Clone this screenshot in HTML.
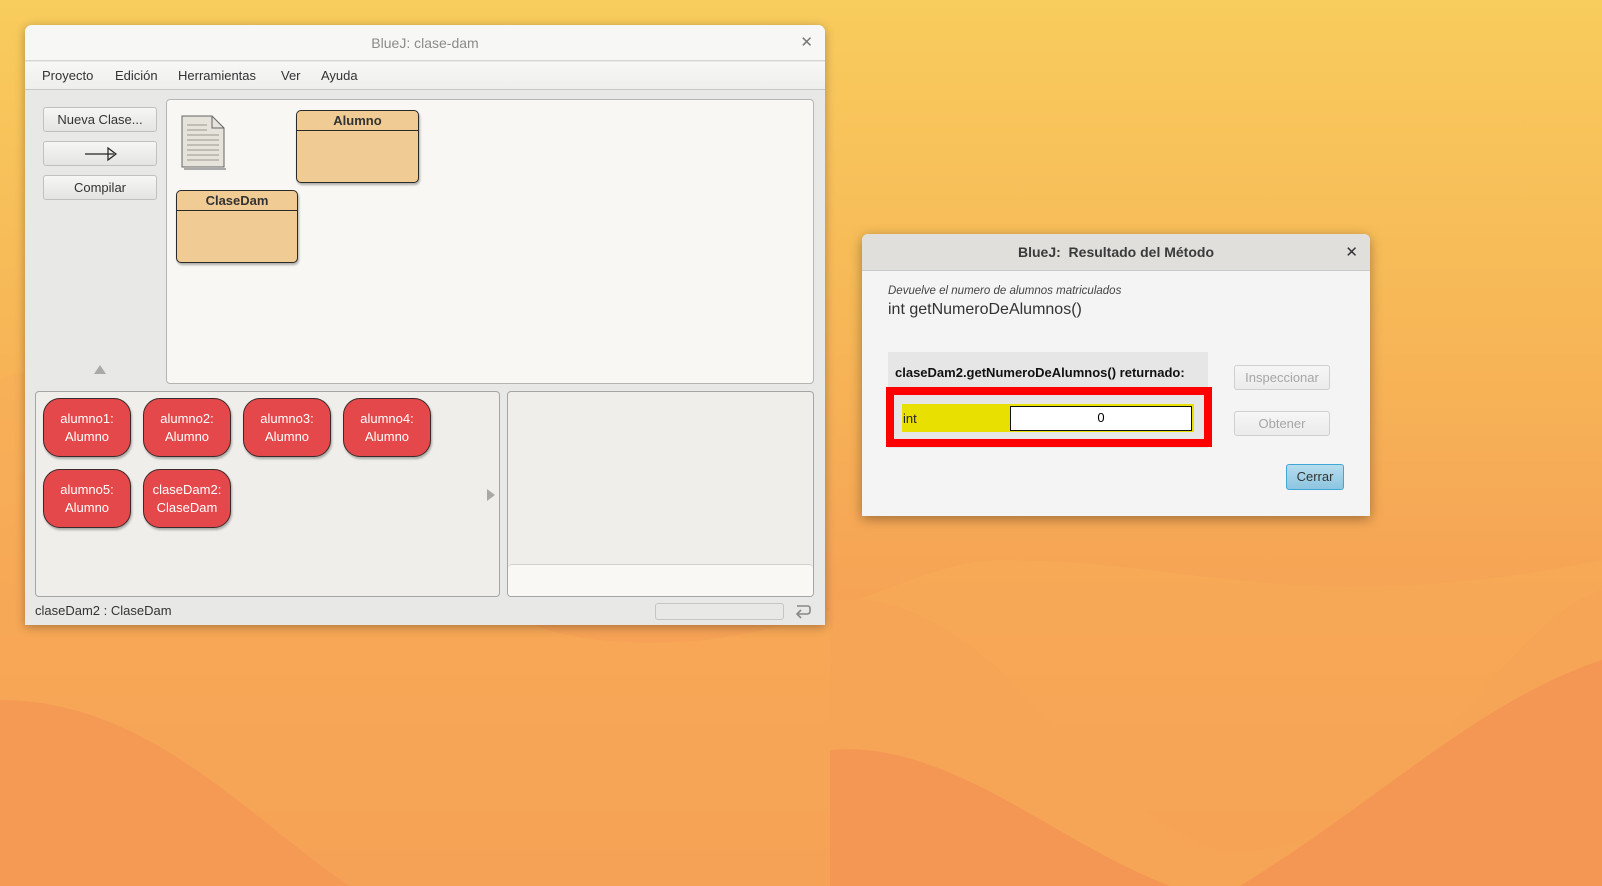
<!DOCTYPE html>
<html><head><meta charset="utf-8"><style>
*{box-sizing:border-box;margin:0;padding:0}
body{width:1602px;height:886px;overflow:hidden;position:relative;font-family:"Liberation Sans","DejaVu Sans",sans-serif;background:linear-gradient(180deg,#f8cc5d 0%,#f7b857 35%,#f6a455 65%,#f59654 100%)}
.abs{position:absolute}
.win{left:25px;top:25px;width:800px;height:600px;background:#e8e8e7;border-radius:7px 7px 0 0;box-shadow:0 2px 10px rgba(0,0,0,.3);overflow:hidden}
.tb{left:0;top:0;width:800px;height:36px;background:#f7f7f6;border-bottom:1px solid #d6d6d4;text-align:center;line-height:36px;color:#8a8a88;font-size:14px}
.menu{left:0;top:37px;width:800px;height:28px;background:linear-gradient(#f7f7f6,#eeeeed);border-bottom:1px solid #c8c8c6;font-size:13px;color:#333;line-height:28px}
.menu span{position:absolute}
.btn{background:linear-gradient(#f6f6f5,#e4e4e3);border:1px solid #c0c0be;border-radius:3px;font-size:13px;color:#333;text-align:center}
.canvas{left:141px;top:74px;width:648px;height:285px;background:#f8f7f3;border:1px solid #b5b5b3;border-radius:4px}
.cls{background:#f0cb94;border:1.5px solid #2a2a2a;border-radius:5px;box-shadow:1px 2px 2px rgba(0,0,0,.3)}
.cls div{height:20px;border-bottom:1.5px solid #2a2a2a;text-align:center;font-weight:bold;font-size:13px;line-height:20px;color:#333}
.obj{width:88px;height:59px;background:#e4484b;border:1.5px solid #3a2a2a;border-radius:17px;color:#fff;font-size:13px;text-align:center;line-height:17.5px;padding-top:11px;box-shadow:1px 2px 2px rgba(0,0,0,.3)}
.dlg{left:862px;top:234px;width:508px;height:282px;background:#f4f4f4;border-radius:6px 6px 0 0;box-shadow:0 3px 12px rgba(0,0,0,.35);overflow:hidden}
.dbtn{background:linear-gradient(#f6f6f6,#ebebeb);border:1px solid #cfcfcf;border-radius:3px;color:#a6a6a6;font-size:13px;text-align:center}
</style></head><body>
<svg class="abs" style="left:0;top:0" width="1602" height="886">
<path d="M0 380 C200 300 380 620 600 640 C800 660 900 560 1000 560 C1200 560 1300 620 1602 560 L1602 886 L0 886Z" fill="#f7ad58" opacity=".5"/>
<path d="M830 600 C1000 580 1100 840 1230 850 C1400 860 1500 620 1602 590 L1602 886 L830 886Z" fill="#f6a456"/>
<path d="M0 700 C150 700 250 820 350 886 L0 886Z" fill="#f59a55"/>
<path d="M830 750 C950 740 1050 840 1170 886 L830 886Z" fill="#f49654"/>
<path d="M1240 886 C1380 800 1480 700 1602 660 L1602 886Z" fill="#f49654"/>
</svg>

<div class="abs win">
 <div class="abs tb">BlueJ: clase-dam<span class="abs" style="right:12px;top:0;color:#777;font-size:15px">✕</span></div>
 <div class="abs menu"><span style="left:17px">Proyecto</span><span style="left:90px">Edición</span><span style="left:153px">Herramientas</span><span style="left:256px">Ver</span><span style="left:296px">Ayuda</span></div>
 <div class="abs btn" style="left:18px;top:82px;width:114px;height:25px;line-height:23px">Nueva Clase...</div>
 <div class="abs btn" style="left:18px;top:116px;width:114px;height:25px"><svg width="114" height="23"><path d="M41 12 H70" stroke="#222" stroke-width="1.2"/><path d="M64 6 L72 12 L64 18Z" fill="none" stroke="#222" stroke-width="1.2"/></svg></div>
 <div class="abs btn" style="left:18px;top:150px;width:114px;height:25px;line-height:23px">Compilar</div>
 <div class="abs" style="left:69px;top:340px;width:0;height:0;border-left:6px solid transparent;border-right:6px solid transparent;border-bottom:9px solid #a9a9a7"></div>
 <div class="abs canvas">
  <svg class="abs" style="left:14px;top:15px" width="46" height="56"><path d="M1 1 H31 L43 13 V52 H1Z" fill="#e6e3da" stroke="#666"/><path d="M31 1 V13 H43" fill="none" stroke="#666"/><g stroke="#9a978f"><path d="M6 10H26M6 15H26M6 20H38M6 25H38M6 30H38M6 35H38M6 40H38M6 45H38"/></g><path d="M3 54H45" stroke="#aaa" stroke-width="2"/></svg>
  <div class="abs cls" style="left:129px;top:10px;width:123px;height:73px"><div>Alumno</div></div>
  <div class="abs cls" style="left:9px;top:90px;width:122px;height:73px"><div>ClaseDam</div></div>
 </div>
 <div class="abs" style="left:10px;top:366px;width:465px;height:206px;background:#efeeea;border:1px solid #a5a5a3;border-radius:4px"></div>
 <div class="abs obj" style="left:18px;top:373px">alumno1:<br>Alumno</div>
 <div class="abs obj" style="left:118px;top:373px">alumno2:<br>Alumno</div>
 <div class="abs obj" style="left:218px;top:373px">alumno3:<br>Alumno</div>
 <div class="abs obj" style="left:318px;top:373px">alumno4:<br>Alumno</div>
 <div class="abs obj" style="left:18px;top:444px">alumno5:<br>Alumno</div>
 <div class="abs obj" style="left:118px;top:444px">claseDam2:<br>ClaseDam</div>
 <div class="abs" style="left:462px;top:464px;border-top:6px solid transparent;border-bottom:6px solid transparent;border-left:8px solid #a9a9a7"></div>
 <div class="abs" style="left:482px;top:366px;width:307px;height:206px;background:#efeeea;border:1px solid #a5a5a3;border-radius:4px;overflow:hidden"><div class="abs" style="left:0;top:172px;width:305px;height:33px;background:#f9f8f4;border-top:1px solid #d0d0ce;border-radius:4px"></div></div>
 <div class="abs" style="left:10px;top:578px;font-size:13px;color:#333">claseDam2 : ClaseDam</div>
 <div class="abs" style="left:630px;top:578px;width:129px;height:17px;border:1px solid #c5c5c3;border-radius:3px;background:#e8e8e7"></div>
 <svg class="abs" style="left:768px;top:576px" width="20" height="20"><path d="M4 5 H15 Q17 5 17 8 V10 Q17 13 14 13 H5" fill="none" stroke="#888" stroke-width="1.6"/><path d="M8 9 L4 13 L8 17" fill="none" stroke="#888" stroke-width="1.6"/></svg>
</div>

<div class="abs dlg">
 <div class="abs" style="left:0;top:0;width:508px;height:37px;background:#e0dfdc;border-bottom:1px solid #c8c8c6;text-align:center;line-height:37px;font-size:14px;font-weight:bold;color:#3a3a3a">BlueJ:&nbsp; Resultado del Método<span class="abs" style="right:12px;top:0;font-size:15px;color:#333">✕</span></div>
 <div class="abs" style="left:26px;top:51px;font-size:11.5px;font-style:italic;color:#444">Devuelve el numero de alumnos matriculados</div>
 <div class="abs" style="left:26px;top:67px;font-size:16px;color:#333">int getNumeroDeAlumnos()</div>
 <div class="abs" style="left:26px;top:118px;width:320px;height:96px;background:#e6e6e6"></div>
 <div class="abs" style="left:33px;top:131px;font-size:13px;font-weight:bold;color:#111">claseDam2.getNumeroDeAlumnos() returnado:</div>
 <div class="abs" style="left:24px;top:153px;width:326px;height:60px;border:8px solid #fe0000;background:#e6e6e6"></div>
 <div class="abs" style="left:40px;top:170px;width:292px;height:28px;background:#e8e000"></div>
 <div class="abs" style="left:41px;top:177px;font-size:13px;color:#222">int</div>
 <div class="abs" style="left:148px;top:172px;width:182px;height:25px;background:#fff;border:1.5px solid #111;text-align:center;font-size:13px;line-height:22px">0</div>
 <div class="abs dbtn" style="left:372px;top:131px;width:96px;height:25px;line-height:23px">Inspeccionar</div>
 <div class="abs dbtn" style="left:372px;top:177px;width:96px;height:25px;line-height:23px">Obtener</div>
 <div class="abs" style="left:424px;top:230px;width:58px;height:26px;background:linear-gradient(#b6dcee,#8dc5e0);border:1.5px solid #3ea7d6;border-radius:3px;text-align:center;line-height:23px;font-size:13px;color:#333">Cerrar</div>
</div>
</body></html>
